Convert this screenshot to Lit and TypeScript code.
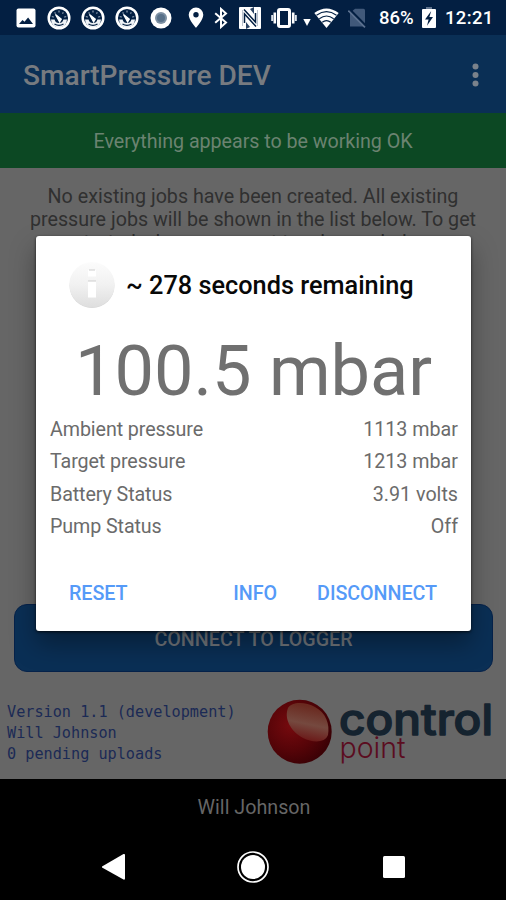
import { LitElement, html, css, svg } from "lit";
import { customElement, property } from "lit/decorators.js";

const gauge = () => html`<svg class="gauge" width="24" height="24" viewBox="0 0 24 24">
  <circle cx="12" cy="12" r="10.3" fill="#031f42" stroke="#fff" stroke-width="2.500" />
  <path d="M4 13.500a8 8 0 0 0 16 0h-3.600a4.500 4.500 0 0 1-8.800 0z" fill="#eef2f6" />
  <path d="M12.600 16 8.500 8.500l5.800 4.700z" fill="#fff" stroke="#fff" stroke-width="1.200" />
  <path d="M4.800 10.500l2 .6M7.600 6.400l1 1.300M12 4.600v1.800M16.400 6.400l-1 1.300M19.200 10.500l-2 .6" stroke="#8595aa" stroke-width="1.300" />
  <path d="M7.500 18q4.500 2.600 9 0" fill="none" stroke="#031f42" stroke-width="1.300" />
</svg>`;

@customElement("status-bar")
export class StatusBar extends LitElement {
  static styles = css`
    :host { display: flex; align-items: center; height: 35px; box-sizing: border-box; background: #031f42; color: #fff; padding-left: 16px; font: 500 18.5px/35px Roboto, sans-serif; }
    svg { display: block; flex: none; }
    span { padding-top: 2px; }
    .gauge { margin-right: 10px; }
    .photo { margin-right: 11px; }
    .dot { margin: 0 16px 0 1px; }
    .pin { margin-right: 10px; }
    .bt { margin-right: 11px; }
    .nfc { margin-right: 10px; }
    .vib { margin-right: 6px; }
    .data { margin-right: 3px; }
    .wifi { margin-right: 9px; }
    .sim { margin-right: 12px; }
    .pct { width: 43px; }
    .time { margin-left: 9px; letter-spacing: 0.35px; }
  `;
  render() {
    return html`
      <svg class="photo" width="20" height="20" viewBox="0 0 20 20">
        <rect x=".5" y=".5" width="19" height="19" rx="2" fill="#fff" />
        <path d="M3 16l3.500-4 2 1.800 3.600-4.300L17 16z" fill="#031f42" />
      </svg>
      ${gauge()}${gauge()}${gauge()}
      <svg class="dot" width="22" height="22" viewBox="0 0 22 22">
        <circle cx="11" cy="11" r="10.500" fill="#fff" />
        <circle cx="11" cy="11" r="6" fill="#7d90a3" />
        <circle cx="11" cy="11" r="4" fill="#587189" />
      </svg>
      <svg class="pin" width="16" height="21" viewBox="0 0 16 21">
        <path d="M8 .5a7.300 7.300 0 0 0-7.300 7.300C.7 13 8 20.800 8 20.800S15.300 13 15.300 7.800A7.300 7.300 0 0 0 8 .5z" fill="#fff" />
        <circle cx="8" cy="7.700" r="2.700" fill="#031f42" />
      </svg>
      <svg class="bt" width="14" height="22" viewBox="0 0 14 22">
        <path d="M1.200 6.200 12 15.600 7 20V2l5 4.400L1.200 15.800" fill="none" stroke="#fff" stroke-width="2" />
      </svg>
      <svg class="nfc" width="22" height="22" viewBox="0 0 22 22">
        <rect width="22" height="22" rx="1" fill="#fff" />
        <path d="M5 2.500l11.500 12.500V6" fill="none" stroke="#031f42" stroke-width="1.500" />
        <path d="M17 19.500 5.500 7v9" fill="none" stroke="#031f42" stroke-width="1.500" />
        <path d="M3.500 3v16M18.500 3v16" stroke="#a9b4c2" stroke-width=".8" />
        <path d="M7 15v7l4-2zM15 7V0l-4 2z" fill="#2b4363" />
      </svg>
      <svg class="vib" width="26" height="20" viewBox="0 0 26 20">
        <rect x="7.500" y="1.500" width="11" height="17" rx="1.500" fill="#031f42" stroke="#fff" stroke-width="3" />
        <path d="M3.800 4.500v11M22.200 4.500v11" stroke="#fff" stroke-width="2.600" />
        <path d="M1.200 7v6M24.800 7v6" stroke="#dde3ea" stroke-width="2" />
      </svg>
      <svg class="data" width="8" height="18" viewBox="0 0 8 18"><path d="M.3 10h7.400L4 17z" fill="#fff" /></svg>
      <svg class="wifi" width="25" height="20" viewBox="0 0 25 20">
        <path d="M.3 5Q12.500-4 24.700 5L12.500 20z" fill="#fff" />
        <path d="M2.500 7.200q10-7.200 20 0M5.300 10.800q7.200-5.500 14.400 0M8.200 14.300q4.300-3.300 8.600 0" fill="none" stroke="#031f42" stroke-width="1.100" />
      </svg>
      <svg class="sim" width="19" height="20" viewBox="0 0 19 20">
        <path d="M2 5 7 .7h8.500q1.500 0 1.500 1.500V18.500H2z" fill="#41597a" />
        <path d="M1.500 1.500 18.500 18.500" stroke="#031f42" stroke-width="2.500" />
        <path d="M.3 2.600 17 19.300" stroke="#5c7190" stroke-width="1.700" />
      </svg>
      <span class="pct">86%</span>
      <svg width="14" height="22" viewBox="0 0 14 22">
        <path d="M4 0h6v2H4z" fill="#62758f" />
        <rect y="2" width="14" height="19" rx="1" fill="#fff" />
        <path d="M9.200 4 3 12.400h3.600L5 18.800l6-8.700H7.400z" fill="#031f42" />
      </svg>
      <span class="time">12:21</span>
    `;
  }
}

@customElement("pressure-dialog")
export class PressureDialog extends LitElement {
  @property({ attribute: false }) rows: [string, string][] = [
    ["Ambient pressure", "1113 mbar"],
    ["Target pressure", "1213 mbar"],
    ["Battery Status", "3.91 volts"],
    ["Pump Status", "Off"],
  ];
  static styles = css`
    :host { display: flex; flex-direction: column; box-sizing: border-box; background: #fff; border-radius: 3px; font-family: Roboto, sans-serif; box-shadow: 0 1px 3px rgba(0,0,0,.75), 0 13px 26px rgba(0,0,0,.34); }
    .head { display: flex; align-items: center; height: 50px; margin: 24px 0 0 32px; gap: 10px; font: 500 25.3px/50px Roboto, sans-serif; color: #080808; white-space: nowrap; }
    .head span { padding-top: 1px; }
    .big { height: 82px; margin-top: 20px; text-align: center; font-size: 70.3px; line-height: 82px; color: #707070; white-space: nowrap; }
    .rows { display: flex; flex-direction: column; padding: 2px 13px 0 14px; }
    .row { display: flex; justify-content: space-between; font-size: 19.7px; line-height: 32.4px; color: #6b6b6b; }
    .key { letter-spacing: -.1px; }
    .actions { display: flex; margin: 33px 34px 0 33px; font: 500 19.7px/34px Roboto, sans-serif; color: #559af8; letter-spacing: -.05px; }
    .info { margin: 0 40px 0 auto; }
  `;
  render() {
    return html`
      <div class="head">
        <svg width="48" height="48" viewBox="0 0 48 48">
          <defs>
            <linearGradient id="disc" x2="0" y2="1"><stop stop-color="#fcfcfc" /><stop offset=".5" stop-color="#f1f1f1" /><stop offset="1" stop-color="#dedede" /></linearGradient>
          </defs>
          <circle cx="24" cy="24.600" r="22.400" fill="#d6d6d6" />
          <circle cx="24" cy="23.800" r="22.700" fill="url(#disc)" />
          <path d="M20 9h8v6.500h-8zM20 20h8v16.500h-8z" fill="#fff" />
          <path d="M21 9h6M20 20h8" stroke="#cdcdcd" />
        </svg>
        <span>~ 278 seconds remaining</span>
      </div>
      <div class="big">100.5 mbar</div>
      <div class="rows">${this.rows.map(([k, v]) => html`<div class="row"><span class="key">${k}</span><span>${v}</span></div>`)}</div>
      <div class="actions"><span>RESET</span><span class="info">INFO</span><span>DISCONNECT</span></div>
    `;
  }
}

@customElement("app-root")
export class AppRoot extends LitElement {
  static styles = css`
    :host { display: flex; flex-direction: column; position: relative; width: 506px; height: 900px; overflow: hidden; background: #666; font-family: Roboto, sans-serif; }
    status-bar { flex: none; }
    .appbar { display: flex; align-items: center; justify-content: space-between; height: 78px; padding: 3px 27px 0 23px; box-sizing: border-box; background: #0a2f55; color: #777b80; font: 500 28.1px/34px Roboto, sans-serif; }
    .menu { display: block; }
    .banner { height: 55px; background: #0c4823; color: #6b8371; text-align: center; font-size: 19.7px; line-height: 58px; letter-spacing: -.04px; }
    .intro { height: 436px; box-sizing: border-box; padding-top: 17px; text-align: center; font-size: 19.7px; line-height: 23.2px; color: #303030; white-space: nowrap; }
    .connect { height: 68px; margin: 0 13px 0 14px; box-sizing: border-box; border: 1px solid #06224a; border-radius: 13px; background: #0a2f55; color: #70757b; text-align: center; font: 500 19.7px/69px Roboto, sans-serif; }
    .foot { display: flex; height: 107px; box-sizing: border-box; padding: 30px 0 0 7px; }
    .meta { width: 258px; font: 15.2px/21px "DejaVu Sans Mono", monospace; color: #1b2a55; white-space: pre; }
    .user { height: 121px; background: #000; flex: none; }
    .name { height: 55px; padding-left: 2px; text-align: center; font-size: 19.7px; line-height: 57px; color: #666; }
    .nav { display: flex; align-items: center; justify-content: space-between; height: 66px; padding: 0 101px; }
    .home { margin-right: 3px; }
    .logo { display: block; margin-top: -11px; }
    pressure-dialog { position: absolute; left: 36px; top: 236px; width: 435px; height: 395px; }
  `;
  render() {
    return html`
      <status-bar></status-bar>
      <div class="appbar">
        <span>SmartPressure DEV</span>
        <svg class="menu" width="7" height="26" viewBox="0 0 7 26">
          ${[3.5, 12, 20.5].map((y) => svg`<circle cx="3.500" cy=${y} r="3" fill="#7a828b" />`)}
        </svg>
      </div>
      <div class="banner">Everything appears to be working OK</div>
      <div class="intro">No existing jobs have been created. All existing<br />pressure jobs will be shown in the list below. To get<br />started, please connect to a logger below</div>
      <div class="connect">CONNECT TO LOGGER</div>
      <div class="foot">
        <div class="meta">Version 1.1 (development)
Will Johnson
0 pending uploads</div>
        <svg class="logo" width="234" height="76" viewBox="265 691 234 76">
          <defs>
            <radialGradient id="ball" cx=".36" cy=".4" r=".65"><stop stop-color="#760a0e" /><stop offset=".6" stop-color="#560408" /><stop offset="1" stop-color="#3b0105" /></radialGradient>
            <linearGradient id="shine" x1=".6" y1=".1" x2=".4" y2="1"><stop stop-color="#6a2a20" /><stop offset=".5" stop-color="#75493f" /><stop offset="1" stop-color="#6a1414" /></linearGradient>
          </defs>
          <circle cx="299.700" cy="731.700" r="32" fill="url(#ball)" />
          <path d="M288 708c4-7 18-6 27-1 11 6 15 17 13 28-3 8-15 8-25 3-13-7-19-20-15-30z" fill="url(#shine)" />
          <text x="339" y="735" textLength="154" lengthAdjust="spacingAndGlyphs" font-family="Inter, sans-serif" font-weight="500" font-size="43" fill="#15232f" stroke="#15232f" stroke-width="1.400" stroke-linejoin="round">control</text>
          <text x="339.500" y="757.500" textLength="66" lengthAdjust="spacingAndGlyphs" font-family="Inter, sans-serif" font-weight="300" font-size="29" fill="#5b0c20">point</text>
        </svg>
      </div>
      <div class="user">
        <div class="name">Will Johnson</div>
        <div class="nav">
          <svg width="25" height="28" viewBox="0 0 25 28"><path d="M1 13.500 22.500 1q1.500-.5 1.500 1v23.500q0 1.500-1.500 1L1 14.500z" fill="#fff" /></svg>
          <svg class="home" width="34" height="34" viewBox="0 0 34 34"><circle cx="17" cy="17" r="15" fill="none" stroke="#fff" stroke-width="1.700" /><circle cx="17" cy="17" r="12" fill="#fff" /></svg>
          <svg width="22" height="22" viewBox="0 0 22 22"><rect width="22" height="22" rx="1.500" fill="#fff" /></svg>
        </div>
      </div>
      <pressure-dialog></pressure-dialog>
    `;
  }
}
